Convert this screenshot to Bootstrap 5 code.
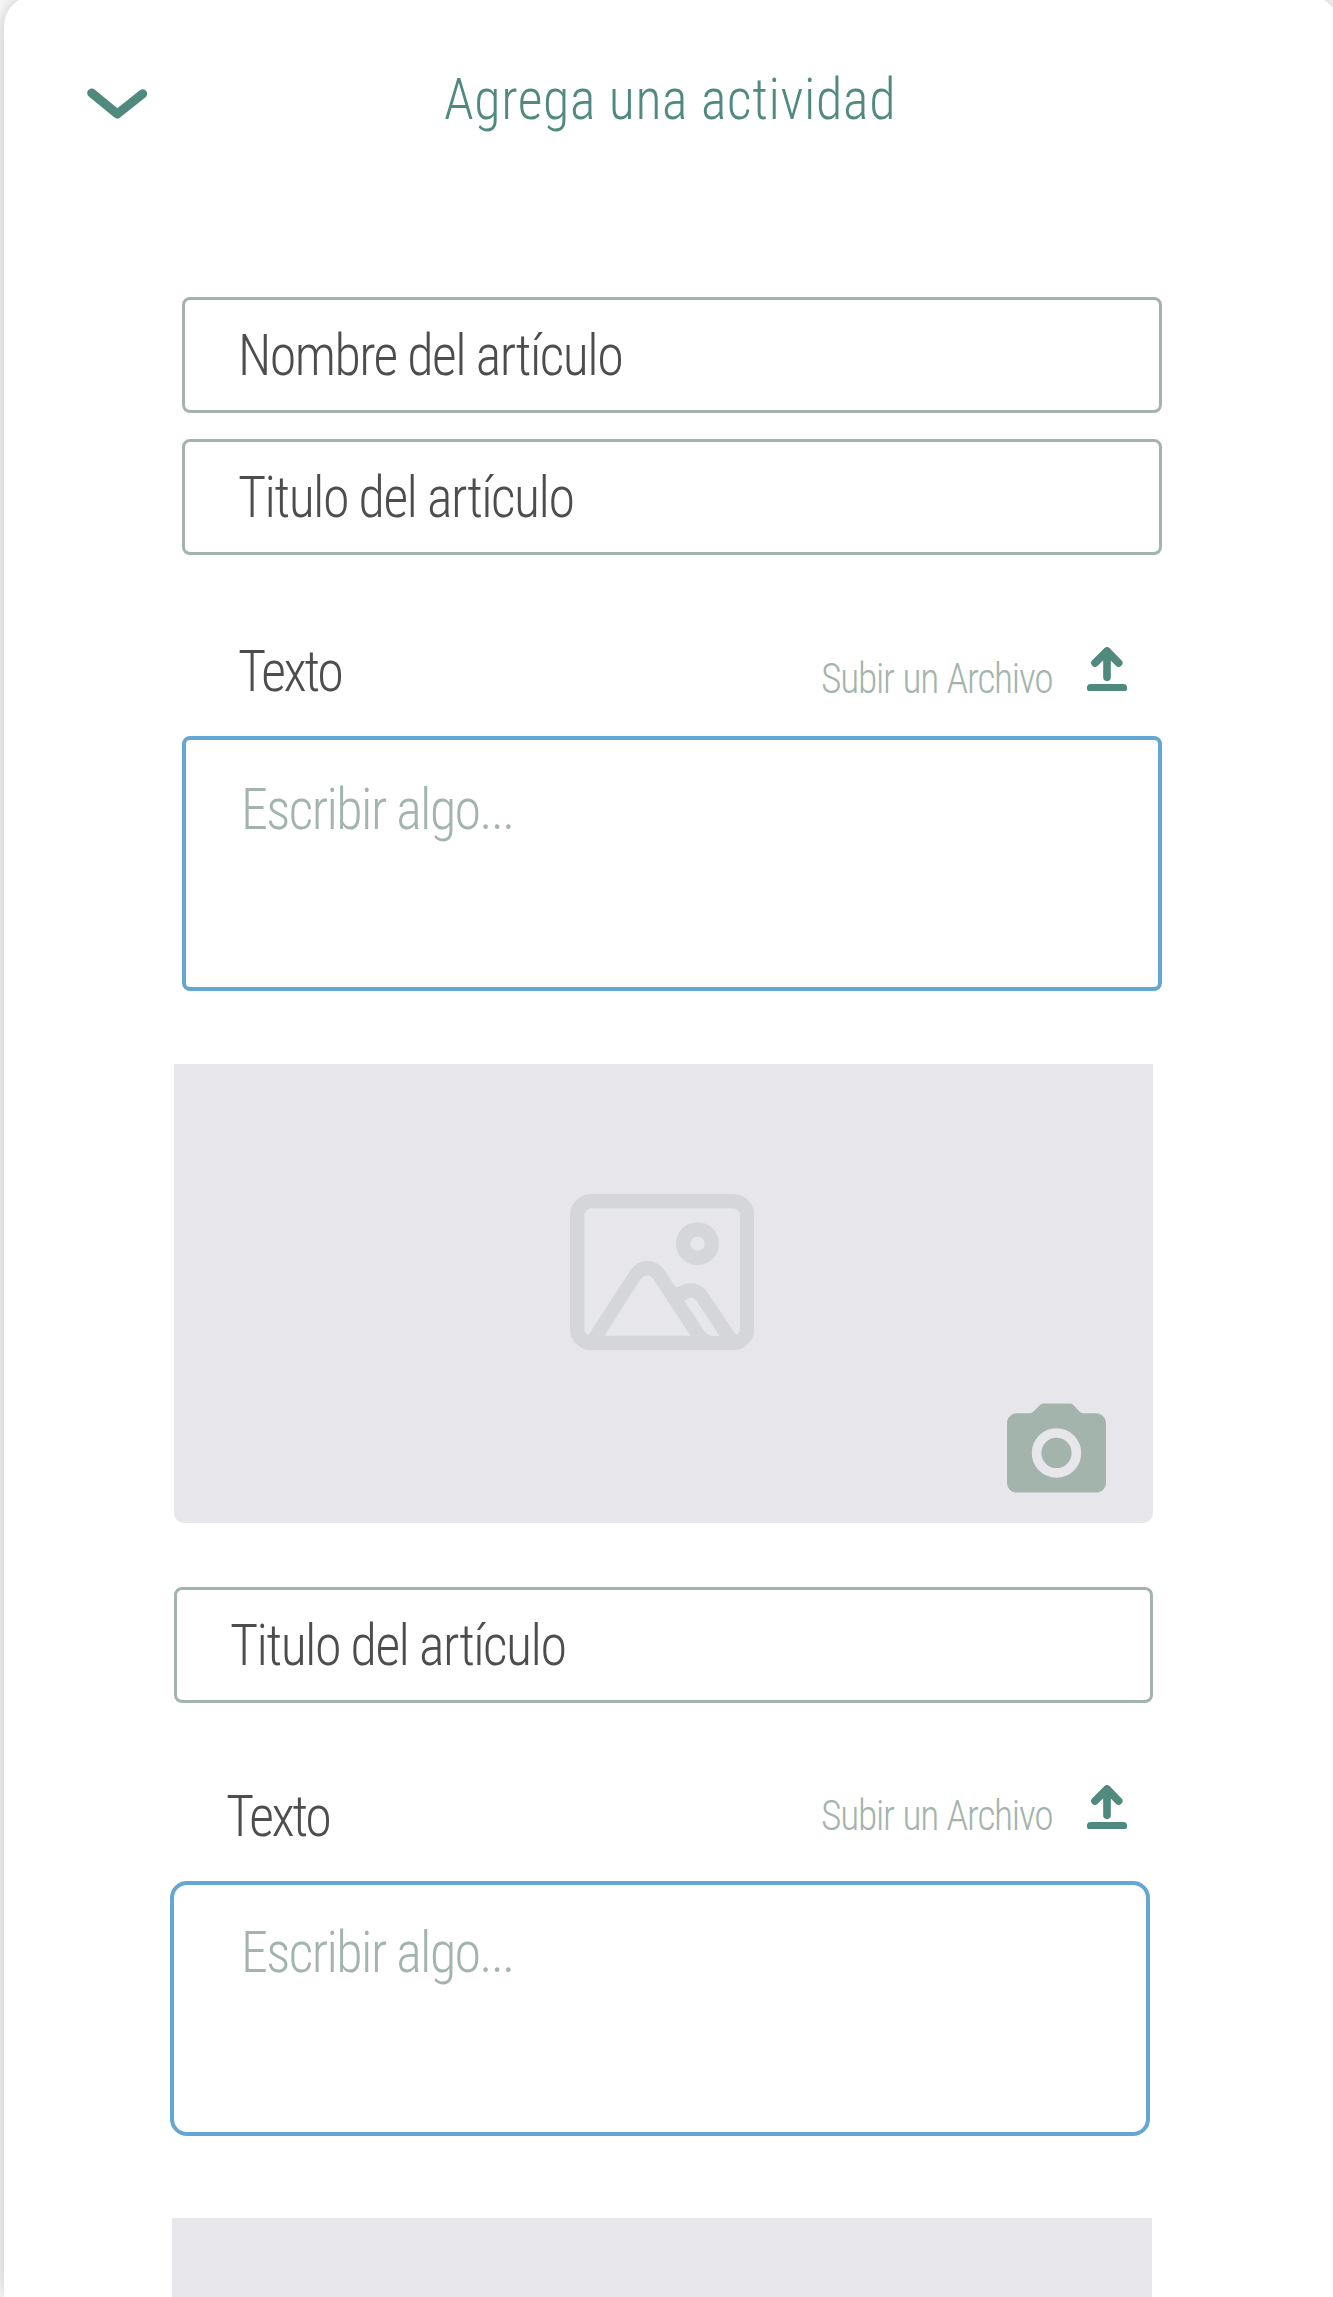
<!DOCTYPE html>
<html lang="es">
<head>
<meta charset="utf-8">
<meta name="viewport" content="width=device-width, initial-scale=1">
<title>Agrega una actividad</title>
<link rel="stylesheet" href="https://cdn.jsdelivr.net/npm/bootstrap@5.3.0/dist/css/bootstrap.min.css">
<style>
  :root { --green: #50897e; --sage: #a3b4ad; --ink: #4d4d4d; --blue: #65a7d4; --panel: #e6e6eb; }
  body { height: 2297px; background: #fff; font-family: "Roboto Condensed", Roboto, "Liberation Sans", sans-serif; font-weight: 325; }
  svg { display: block; flex: none; }
  .sheet { width: 1335.5px; height: 2301px; margin: -4px 0 0 3.5px; padding: 4px 0 0 .5px; border-radius: 30px 30px 0 0; background: #fff; box-shadow: 0 0 24px rgba(0,0,0,.27); }
  .topbar { height: 297px; padding: 70px 0 0 83px; }
  .txt { display: block; font-size: 57.5px; line-height: 60px; white-space: nowrap; transform: scaleX(.94); transform-origin: 0 0; color: var(--ink); letter-spacing: -1.65px; }
  .heading { margin: 0 0 0 296px; color: var(--green); font-weight: 325; letter-spacing: .65px; }
  .t-label { letter-spacing: -2.5px; }
  .t-hint { color: var(--sage); letter-spacing: -1.7px; }
  .t-upload { font-size: 42px; line-height: 44px; color: var(--sage); letter-spacing: -1.3px; word-spacing: 1px; font-weight: 290; width: 266px; }
  .block { width: 980px; }
  .stack { padding-left: 178px; }
  .field { height: 116px; padding: 2px 0 0 53px; border: 3px solid var(--sage); border-radius: 8px; }
  .writebox { height: 255px; border: 4px solid var(--blue); border-radius: 8px; padding: 40px 0 0 55px; }
  .label-row { height: 181px; padding: 87px 0 0 56px; }
  .photo { height: 458.5px; background: var(--panel); border-radius: 0 0 10px 10px; padding: 130px 0 0 396px; }
  .photo-cut { height: 78.5px; padding: 0; border-radius: 0; }
  .second { margin-left: -8px; width: 979px; }
  .third { margin-left: -12px; }
  .writebox.third { border-radius: 17px; padding: 38px 0 0 67px; }
</style>
</head>
<body class="overflow-hidden d-flex">
<svg width="0" height="0" class="position-absolute">
  <defs>
    <symbol id="upload" viewBox="860 79 120 134">
      <path d="M871 201.500H969M920 170V91M884 127L920 91L955 127" fill="none" stroke="#50897e" stroke-width="23" stroke-linecap="round" stroke-linejoin="round"/>
    </symbol>
  </defs>
</svg>
<main class="sheet flex-shrink-0">
  <header class="topbar d-flex align-items-start">
    <svg class="mt-3" width="61" height="40" viewBox="87 86 61 40"><path d="M91.700 93L117.300 114L142.700 93.700" fill="none" stroke="#50897e" stroke-width="9" stroke-linecap="round" stroke-linejoin="round"/></svg>
    <h1 class="txt heading">Agrega una actividad</h1>
  </header>

  <div class="stack d-flex flex-column">
    <div class="block field d-flex align-items-center"><span class="txt">Nombre del artículo</span></div>
    <div class="block field d-flex align-items-center" style="margin-top:26px"><span class="txt">Titulo del artículo</span></div>

    <div class="block label-row d-flex align-items-start">
      <span class="txt t-label">Texto</span>
      <div class="d-flex align-items-start ms-auto" style="padding-right:35.500px">
        <span class="txt t-upload" style="margin-top:15px">Subir un Archivo</span>
        <svg width="40" height="44.700" style="margin-top:4.500px"><use href="#upload"/></svg>
      </div>
    </div>
    <div class="block writebox"><span class="txt t-hint">Escribir algo...</span></div>

    <div class="block photo second d-flex align-items-start" style="margin-top:73px">
      <svg width="184.300" height="156.300" viewBox="90 74 553 469">
        <rect x="111.500" y="95.500" width="510" height="426" rx="43" fill="none" stroke="#d5d6da" stroke-width="43"/>
        <circle cx="472.500" cy="223" r="43" fill="none" stroke="#d5d6da" stroke-width="43"/>
        <path fill="#d5d6da" fill-rule="evenodd" d="M147 495L270 305Q290 275 322 275Q355 275 375 305L403 348Q408 356 416 352Q468 325 502 368L585 492L605 510H128ZM193 499H452L340 328Q322 308 303 328ZM436 391Q458 378 470 395L538 499Q510 507 493 485L438 402Q433 395 436 391Z"/>
      </svg>
      <svg width="99" height="90" viewBox="2 2 20 18" style="margin:208.500px 0 0 252.700px"><path fill="#a3b4ad" fill-rule="evenodd" d="M9.300 2Q9 2 8.800 2.200L7.300 3.700Q7 4 6.700 4H4C2.900 4 2 4.900 2 6V18C2 19.100 2.900 20 4 20H20C21.100 20 22 19.100 22 18V6C22 4.900 21.100 4 20 4H17.300Q17 4 16.700 3.700L15.400 2.300Q15.100 2 14.800 2ZM12 7A5 5 0 1 1 12 17A5 5 0 1 1 12 7ZM12 8.950A3.050 3.050 0 1 0 12 15.050A3.050 3.050 0 1 0 12 8.950Z"/></svg>
    </div>

    <div class="block field second d-flex align-items-center" style="margin-top:64.500px"><span class="txt">Titulo del artículo</span></div>

    <div class="block label-row third d-flex align-items-start" style="height:177.500px;padding-top:83.500px">
      <span class="txt t-label">Texto</span>
      <div class="d-flex align-items-start ms-auto" style="padding-right:23.500px">
        <span class="txt t-upload" style="margin-top:7px">Subir un Archivo</span>
        <svg width="40" height="44.700" style="margin-top:-2px"><use href="#upload"/></svg>
      </div>
    </div>
    <div class="block writebox third"><span class="txt t-hint">Escribir algo...</span></div>

    <div class="block photo photo-cut" style="margin:82.500px 0 0 -10px"></div>
  </div>
</main>
<script src="https://cdn.jsdelivr.net/npm/bootstrap@5.3.0/dist/js/bootstrap.bundle.min.js"></script>
</body>
</html>
